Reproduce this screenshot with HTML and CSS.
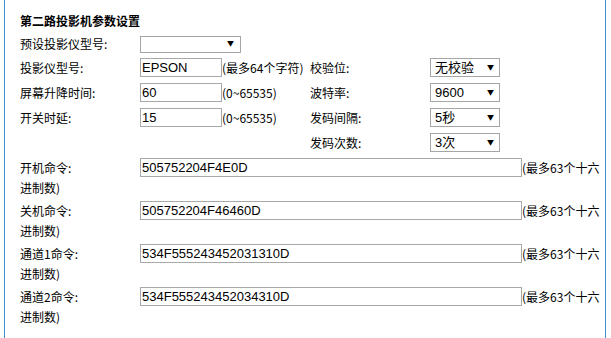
FILE: index.html
```html
<!DOCTYPE html>
<html lang="zh-CN">
<head>
    <meta charset="UTF-8">
    <meta name="viewport" content="width=device-width, initial-scale=1.0">
    <title>第二路投影机参数设置</title>
    <link rel="stylesheet" href="styles.css">
</head>
<body>
    <div class="panel">
        <div class="title">第二路投影机参数设置</div>

        <div class="params">
            <label>预设投影仪型号:</label>
            <span class="pick wide"><select><option></option></select></span>
            <span></span>
            <span></span>

            <label>投影仪型号:</label>
            <span><input class="txt short" value="EPSON"><span class="note">(最多64个字符)</span></span>
            <label>校验位:</label>
            <span class="pick"><select><option>无校验</option></select></span>

            <label>屏幕升降时间:</label>
            <span><input class="txt short" value="60"><span class="note">(0~65535)</span></span>
            <label>波特率:</label>
            <span class="pick"><select><option>9600</option></select></span>

            <label>开关时延:</label>
            <span><input class="txt short" value="15"><span class="note">(0~65535)</span></span>
            <label>发码间隔:</label>
            <span class="pick"><select><option>5秒</option></select></span>

            <span></span>
            <span></span>
            <label>发码次数:</label>
            <span class="pick"><select><option>3次</option></select></span>
        </div>

        <div class="cmds">
            <div class="cmd"><label>开机命令:</label><input class="txt long" value="505752204F4E0D">(最多63个十六进制数)</div>
            <div class="cmd"><label>关机命令:</label><input class="txt long" value="505752204F46460D">(最多63个十六进制数)</div>
            <div class="cmd"><label>通道1命令:</label><input class="txt long" value="534F555243452031310D">(最多63个十六进制数)</div>
            <div class="cmd"><label>通道2命令:</label><input class="txt long" value="534F555243452034310D">(最多63个十六进制数)</div>
        </div>
    </div>
</body>
</html>
```

FILE: styles.css
```css
body {
    margin: 0;
    font-family: "Microsoft YaHei", "Noto Sans CJK SC", sans-serif;
    font-size: 12px;
    color: #000;
    background: #fff;
}
.panel {
    margin-left: 4px;
    width: 602px;
    height: 338px;
    box-sizing: border-box;
    padding: 12px 0 0 15px;
    border-left: 1px solid #3f8fd6;
    border-right: 1px solid #3f8fd6;
}
.title {
    font-weight: bold;
    line-height: 18px;
    margin-bottom: 1px;
}
.params {
    display: grid;
    grid-template-columns: 120px 170px 120px auto;
    grid-template-rows: 24px repeat(4, 25px);
    align-items: center;
}
.txt {
    box-sizing: border-box;
    height: 19px;
    padding: 0 1px;
    border: 1px solid #a9a9a9;
    font-family: "Liberation Sans", Arial, "Noto Sans CJK SC", sans-serif;
    font-size: 13px;
    color: #000;
    outline: none;
    vertical-align: top;
}
.short {
    width: 82px;
}
.long {
    width: 382px;
}
.note {
    line-height: 19px;
}
.pick {
    position: relative;
    display: inline-block;
    width: 70px;
    height: 19px;
}
.pick.wide {
    width: 101px;
    height: 17px;
}
.pick select {
    appearance: none;
    -webkit-appearance: none;
    box-sizing: border-box;
    width: 100%;
    height: 100%;
    margin: 0;
    padding: 0 0 0 4px;
    border: 1px solid #a6a6a6;
    border-radius: 0;
    background: #fff;
    font-family: "Liberation Sans", Arial, "Noto Sans CJK SC", sans-serif;
    font-size: 13px;
    color: #000;
}
.pick::after {
    content: "▼";
    position: absolute;
    right: 6px;
    top: 4px;
    font-size: 7px;
    line-height: 10px;
    pointer-events: none;
}
.pick.wide::after {
    right: 7px;
    top: 3px;
}
.cmds {
    padding-top: 3px;
}
.cmd {
    line-height: 20px;
    margin-bottom: 3px;
}
.cmd label {
    display: inline-block;
    width: 120px;
}
```
